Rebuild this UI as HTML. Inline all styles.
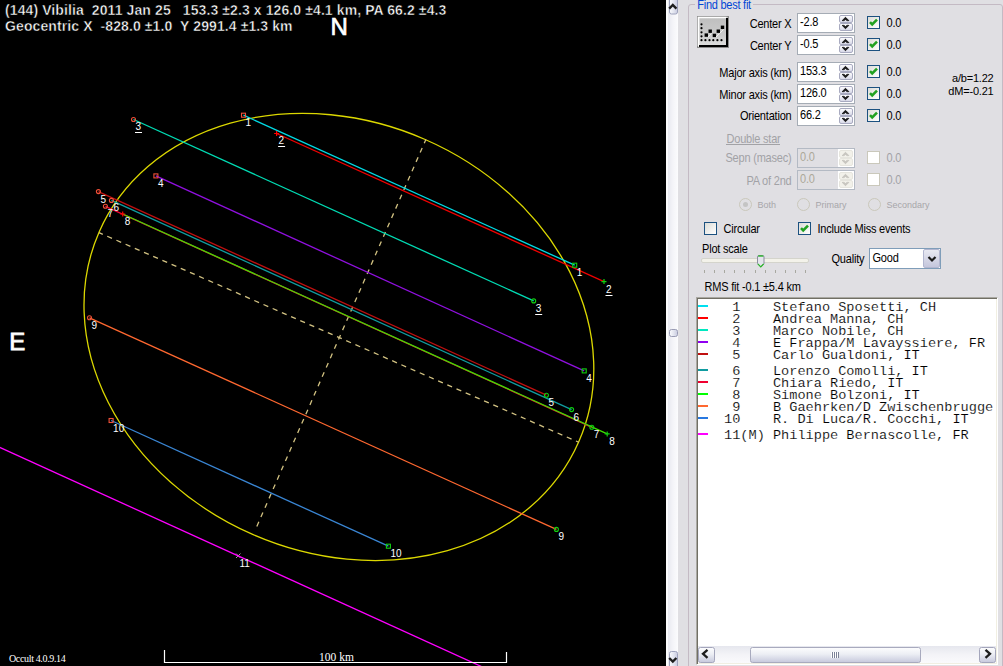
<!DOCTYPE html>
<html><head><meta charset="utf-8"><style>
*{margin:0;padding:0;box-sizing:border-box}
html,body{width:1003px;height:666px;overflow:hidden;background:#000;position:relative;font-family:"Liberation Sans",sans-serif}
#plot{position:absolute;left:0;top:0;width:666px;height:666px;background:#000;overflow:hidden}
#vs{position:absolute;left:666px;top:0;width:12px;height:666px;background:#fbfbfc}
.vtrack{position:absolute;left:2px;top:0;width:10px;height:666px;background:linear-gradient(90deg,#eeeef4,#f8f8fb 60%,#f4f4f8)}
.vbtn{position:absolute;left:3px;width:9px;border:1px solid #a3a3b8;border-radius:2px;background:linear-gradient(90deg,#f4f4f8,#d4d4e2)}
.vthumb{position:absolute;left:3px;top:329px;width:9px;height:8px;border:1px solid #9a9ab0;border-radius:2px;background:linear-gradient(90deg,#f4f4f8,#d0d0de)}
#panel{position:absolute;left:677px;top:0;width:326px;height:666px;background:#e0dfe3}
#ui{position:absolute;left:0;top:0;width:1003px;height:666px;overflow:hidden}
#ui>*{position:absolute}
.t{white-space:nowrap;font-family:"Liberation Sans",sans-serif}
.gbox{left:688px;top:4px;width:315px;height:700px;border:1px solid #c4bac4;border-radius:3px}
.gtitle{left:695px;top:0px;width:58px;height:8px;background:#e0dfe3}
.uline{height:1px;background:#a2a2a6}
.tb{left:797px;width:58px;height:20px;border:1px solid #a5acb5;background:#fff}
.tb.dis{background:#e0dfe3;border-color:#b4bac4}
.spin{width:14px;height:16px}
.spin i{position:absolute;left:0;width:14px;height:8px;border:1px solid #a8aac0;border-radius:2px;background:linear-gradient(180deg,#fcfcfe,#d8d9e8)}
.spin i.up{top:0}.spin i.dn{top:8px}
.spin.dis{background:#fff;outline:1px solid #fff}
.spin.dis i{border-color:#e6e5de;background:#f2f1ea}
.cb{width:13px;height:13px;border:1px solid #1c5180;background:linear-gradient(135deg,#dcdcd7,#fff)}
.cb.dis{border-color:#cac8bb;background:#fff}
.ck{position:absolute}
.rad{width:13px;height:13px;border:1px solid #cac8bb;border-radius:50%;background:transparent}
.rad.sel::after{content:"";position:absolute;left:3px;top:3px;width:5px;height:5px;border-radius:50%;background:#c4c4c4}
.track{left:701px;top:258px;width:108px;height:5px;border:1px solid #d4d4cc;border-radius:2px;background:#f3f2ea}
.tick{top:270px;width:1px;height:3px;background:#a8a8a0}
.combo{left:869px;top:248px;width:72px;height:21px;border:1px solid #7f9db9;background:#fff}
.cbtn{left:923px;top:249px;width:17px;height:19px;border:1px solid #b2b6d0;border-radius:2px;background:linear-gradient(180deg,#e8e9f2,#c4c6dc)}
.lbox{left:696px;top:297px;width:302px;height:368px;border:1px solid;border-color:#a9a8a2 #fff #fff #a9a8a2;background:#fff;box-shadow:inset 1px 1px 0 #716f64,inset -1px -1px 0 #f1efe2}
.bar{width:10px;height:2px}
.row{left:724px;font-family:"Liberation Mono",monospace;font-size:13.6px;line-height:14px;white-space:pre;color:#000;-webkit-text-stroke:0.15px #fff}
.hs{left:698px;top:646px;width:298px;height:17px;background:linear-gradient(180deg,#f0f0f4,#fafafc)}
.hs>div{position:absolute}
.hbtn{top:1px;width:17px;height:16px;border:1px solid #a3a3b8;border-radius:2px;background:linear-gradient(180deg,#fff,#cfd0de)}
.hthumb{left:52px;top:1px;width:171px;height:16px;border:1px solid #a8a8bc;border-radius:2px;background:linear-gradient(180deg,#fff,#d4d4e0)}

.hsb,#vsb{position:absolute}

</style></head><body>
<div id="plot">
<svg width="666" height="666" viewBox="0 0 666 666" style="position:absolute;left:0;top:0">
<ellipse cx="338.9" cy="336.95" rx="261.75" ry="215.5" transform="rotate(23.6 338.9 336.95)" fill="none" stroke="#dcd800" stroke-width="1.3"/>
<line x1="99.04" y1="232.66" x2="578.76" y2="442.24" stroke="#d2c282" stroke-width="1.3" stroke-dasharray="5.2 4.83" stroke-dashoffset="1.09"/>
<line x1="425.88" y1="139.47" x2="255.33" y2="529.84" stroke="#d2c282" stroke-width="1.3" stroke-dasharray="5 5.2" stroke-dashoffset="0.94"/>
<line x1="243.5" y1="115.2" x2="574.7" y2="265.2" stroke="#00dce6" stroke-width="1.3"/>
<line x1="276.6" y1="133.5" x2="604.0" y2="281.6" stroke="#f00000" stroke-width="1.3"/>
<line x1="133.5" y1="119.5" x2="533.7" y2="300.9" stroke="#00dcb4" stroke-width="1.3"/>
<line x1="155.9" y1="175.9" x2="584.2" y2="370.9" stroke="#9010e0" stroke-width="1.3"/>
<line x1="98.4" y1="191.6" x2="546.4" y2="395.2" stroke="#c01010" stroke-width="1.3"/>
<line x1="111.4" y1="200.4" x2="571.6" y2="409.6" stroke="#109ca0" stroke-width="1.3"/>
<line x1="105.4" y1="206.3" x2="591.8" y2="427.3" stroke="#f00030" stroke-width="1.3"/>
<line x1="122.7" y1="214.0" x2="607.2" y2="433.9" stroke="#40e000" stroke-width="1.3"/>
<line x1="89.5" y1="317.8" x2="556.4" y2="529.4" stroke="#ff6830" stroke-width="1.3"/>
<line x1="111.1" y1="420.5" x2="388.4" y2="546.2" stroke="#3a86d4" stroke-width="1.3"/>
<path d="M236 553.5l4.5 4.5M240.5 553.5l-4.5 4.5" stroke="#a0a0a0" stroke-width="1"/>
<line x1="-2" y1="446.6" x2="482" y2="666.8" stroke="#ff00ff" stroke-width="1.3"/>
<rect x="241.5" y="113.2" width="4" height="4" fill="none" stroke="#f05038" stroke-width="1.1"/>
<rect x="572.7" y="263.2" width="4" height="4" fill="none" stroke="#10d010" stroke-width="1.1"/>
<path d="M274.1 133.5H279.1M276.6 131.0V136.0" stroke="#ff0000" stroke-width="1.2"/>
<path d="M601.5 281.6H606.5M604.0 279.1V284.1" stroke="#10d010" stroke-width="1.2"/>
<circle cx="133.5" cy="119.5" r="2" fill="none" stroke="#f05038" stroke-width="1.1"/>
<circle cx="533.7" cy="300.9" r="2" fill="none" stroke="#10d010" stroke-width="1.1"/>
<rect x="153.9" y="173.9" width="4" height="4" fill="none" stroke="#f05038" stroke-width="1.1"/>
<rect x="582.2" y="368.9" width="4" height="4" fill="none" stroke="#10d010" stroke-width="1.1"/>
<circle cx="98.4" cy="191.6" r="2" fill="none" stroke="#f05038" stroke-width="1.1"/>
<circle cx="546.4" cy="395.2" r="2" fill="none" stroke="#10d010" stroke-width="1.1"/>
<circle cx="111.4" cy="200.4" r="2" fill="none" stroke="#f05038" stroke-width="1.1"/>
<circle cx="571.6" cy="409.6" r="2" fill="none" stroke="#10d010" stroke-width="1.1"/>
<circle cx="105.4" cy="206.3" r="2" fill="none" stroke="#f05038" stroke-width="1.1"/>
<circle cx="591.8" cy="427.3" r="2" fill="none" stroke="#10d010" stroke-width="1.1"/>
<path d="M120.2 214.0H125.2M122.7 211.5V216.5" stroke="#ff0000" stroke-width="1.2"/>
<path d="M604.7 433.9H609.7M607.2 431.4V436.4" stroke="#10d010" stroke-width="1.2"/>
<circle cx="89.5" cy="317.8" r="2" fill="none" stroke="#f05038" stroke-width="1.1"/>
<circle cx="556.4" cy="529.4" r="2" fill="none" stroke="#10d010" stroke-width="1.1"/>
<rect x="109.1" y="418.5" width="4" height="4" fill="none" stroke="#f05038" stroke-width="1.1"/>
<rect x="386.4" y="544.2" width="4" height="4" fill="none" stroke="#10d010" stroke-width="1.1"/>
<text x="245.5" y="126" fill="#fff" font-family="Liberation Sans" font-size="10">1</text>
<text x="576.7" y="276" fill="#fff" font-family="Liberation Sans" font-size="10">1</text>
<text x="278.6" y="144" fill="#fff" font-family="Liberation Sans" font-size="10">2</text>
<line x1="278.1" y1="146.5" x2="285.1" y2="146.5" stroke="#fff" stroke-width="1"/>
<text x="606.0" y="293" fill="#fff" font-family="Liberation Sans" font-size="10">2</text>
<line x1="605.5" y1="295.5" x2="612.5" y2="295.5" stroke="#fff" stroke-width="1"/>
<text x="135.5" y="130" fill="#fff" font-family="Liberation Sans" font-size="10">3</text>
<line x1="135.0" y1="132.5" x2="142.0" y2="132.5" stroke="#fff" stroke-width="1"/>
<text x="535.7" y="312" fill="#fff" font-family="Liberation Sans" font-size="10">3</text>
<line x1="535.2" y1="314.5" x2="542.2" y2="314.5" stroke="#fff" stroke-width="1"/>
<text x="157.9" y="187" fill="#fff" font-family="Liberation Sans" font-size="10">4</text>
<text x="586.2" y="382" fill="#fff" font-family="Liberation Sans" font-size="10">4</text>
<text x="100.4" y="203" fill="#fff" font-family="Liberation Sans" font-size="10">5</text>
<text x="548.4" y="406" fill="#fff" font-family="Liberation Sans" font-size="10">5</text>
<text x="113.4" y="211" fill="#fff" font-family="Liberation Sans" font-size="10">6</text>
<text x="573.6" y="421" fill="#fff" font-family="Liberation Sans" font-size="10">6</text>
<text x="107.4" y="217" fill="#fff" font-family="Liberation Sans" font-size="10">7</text>
<text x="593.8" y="438" fill="#fff" font-family="Liberation Sans" font-size="10">7</text>
<text x="124.7" y="225" fill="#fff" font-family="Liberation Sans" font-size="10">8</text>
<text x="609.2" y="445" fill="#fff" font-family="Liberation Sans" font-size="10">8</text>
<text x="91.5" y="329" fill="#fff" font-family="Liberation Sans" font-size="10">9</text>
<text x="558.4" y="540" fill="#fff" font-family="Liberation Sans" font-size="10">9</text>
<text x="113.1" y="432" fill="#fff" font-family="Liberation Sans" font-size="10">10</text>
<text x="390.4" y="557" fill="#fff" font-family="Liberation Sans" font-size="10">10</text>
<text x="239.5" y="567" fill="#fff" font-family="Liberation Sans" font-size="10">11</text>
<path d="M164.5 650V662.5H506.5V652" fill="none" stroke="#fff" stroke-width="1.2"/>
<text x="319" y="661" fill="#fff" font-family="Liberation Serif" font-size="11.5">100 km</text>
<text x="9" y="662" fill="#fff" font-family="Liberation Serif" font-size="10" letter-spacing="-0.35">Occult 4.0.9.14</text>
<text x="5" y="15" fill="#fff" font-family="Liberation Sans" font-weight="bold" font-size="14" letter-spacing="0.1" stroke="#000" stroke-width="0.45" xml:space="preserve">(144) Vibilia  2011 Jan 25   153.3 ±2.3 x 126.0 ±4.1 km, PA 66.2 ±4.3</text>
<text x="5" y="31" fill="#fff" font-family="Liberation Sans" font-weight="bold" font-size="14" letter-spacing="0.1" stroke="#000" stroke-width="0.45" xml:space="preserve">Geocentric X  -828.0 ±1.0  Y 2991.4 ±1.3 km</text>
<text x="330.5" y="35" fill="#fff" font-family="Liberation Sans" font-size="24" stroke="#fff" stroke-width="0.7">N</text>
<text x="9.3" y="349.5" fill="#fff" font-family="Liberation Sans" font-size="24" stroke="#fff" stroke-width="0.8">E</text>
</svg>
</div>
<div id="panel"></div>
<svg id="vsb" width="11.6" height="666" style="position:absolute;left:666px;top:0">
<defs>
<linearGradient id="vtr" x1="0" y1="0" x2="1" y2="0"><stop offset="0" stop-color="#e8e9f0"/><stop offset="0.5" stop-color="#f4f4f8"/><stop offset="1" stop-color="#fbfbfd"/></linearGradient>
<linearGradient id="vbt" x1="0" y1="0" x2="1" y2="0"><stop offset="0" stop-color="#fafbfe"/><stop offset="0.5" stop-color="#e4e6f0"/><stop offset="1" stop-color="#c8cbe0"/></linearGradient>
</defs>
<rect x="0" y="0" width="12" height="666" fill="#fcfcfd"/>
<rect x="2" y="0" width="9.6" height="666" fill="url(#vtr)"/>
<rect x="3.5" y="-3.5" width="8" height="17.5" rx="2" fill="url(#vbt)" stroke="#9ea2bc"/>
<path d="M3.2 8.6L6.8 5L10.4 8.6" fill="none" stroke="#1e1e1e" stroke-width="2.4"/>
<rect x="3.5" y="329.5" width="8" height="7" rx="2" fill="url(#vbt)" stroke="#9a9cb4"/>
<rect x="3.5" y="651.5" width="8" height="18" rx="2" fill="url(#vbt)" stroke="#9ea2bc"/>
<path d="M3.2 658L6.8 661.6L10.4 658" fill="none" stroke="#1e1e1e" stroke-width="2.4"/>
</svg>
<div id="ui">
<div class="gbox"></div>
<div class="gtitle"></div>
<div class="t" style="top:-1px;left:697.3px;font-size:11px;line-height:13px;color:#0046d5;letter-spacing:-0.25px;transform:scaleY(1.1);transform-origin:0 10px;">Find best fit</div>
<svg class="fitbtn" width="32" height="32" style="left:697px;top:16px">
<defs><linearGradient id="bg" x1="0" y1="0" x2="0" y2="1"><stop offset="0" stop-color="#bebebe"/><stop offset="0.6" stop-color="#cacaca"/><stop offset="1" stop-color="#e2e2e2"/></linearGradient></defs>
<rect x="0.5" y="0.5" width="31" height="31" fill="url(#bg)" stroke="#8c8c8c"/>
<path d="M1.5 30V1.5H29.5" fill="none" stroke="#fff" stroke-width="1.6"/>
<path d="M2 30H30V2" fill="none" stroke="#000" stroke-width="2"/>
<g fill="#000">
<circle cx="4.5" cy="8.3" r="1.1"/><circle cx="4.5" cy="12.2" r="1.1"/><circle cx="4.5" cy="16.3" r="1.1"/><circle cx="4.5" cy="20.3" r="1.1"/><circle cx="4.5" cy="24.2" r="1.1"/>
<circle cx="8.4" cy="24.2" r="1.1"/><circle cx="12.5" cy="24.2" r="1.1"/><circle cx="16.3" cy="24.2" r="1.1"/><circle cx="20.4" cy="24.2" r="1.1"/><circle cx="24.5" cy="24.2" r="1.1"/>
<rect x="7.6" y="17.4" width="3.4" height="3.4"/><rect x="11.5" y="13.5" width="3.4" height="3.4"/><rect x="15.7" y="17.7" width="3.4" height="3.4"/><rect x="19.6" y="13.5" width="3.4" height="3.4"/><rect x="23.8" y="9.6" width="3.4" height="3.4"/>
</g>
<path d="M11 21L14.5 17.5M19 21L22.5 17.5M23 17L26.5 13.5" stroke="#f0f0f0" stroke-width="1"/>
</svg>
<div class="t" style="top:18px;right:211.5px;font-size:11px;line-height:13px;color:#000;letter-spacing:-0.2px;transform:scaleY(1.1);transform-origin:0 10px;">Center X</div>
<div class="tb" style="top:13px"></div>
<div class="t" style="top:16px;left:800px;font-size:11px;line-height:13px;color:#000;letter-spacing:-0.2px;transform:scaleY(1.1);transform-origin:0 10px;">-2.8</div>
<div class="spin" style="left:839px;top:15px"><i class="up"></i><i class="dn"></i><svg width="14" height="16" style="position:absolute;left:0;top:0"><path d="M3.2 5.6L6.5 2.3L9.8 5.6H8.2L6.5 4.5L4.8 5.6ZM3.2 10.4H4.8L6.5 11.5L8.2 10.4H9.8L6.5 13.7Z" fill="#1a1a1a" stroke="#1a1a1a" stroke-width="1" stroke-linejoin="round"/></svg></div>
<div class="cb chk" style="left:867px;top:16px"></div>
<svg class="ck" width="13" height="13" style="left:867px;top:16px"><path d="M3 6.2L5.2 8.4L10 3.6" fill="none" stroke="#21a121" stroke-width="2.6"/></svg>
<div class="t" style="top:17px;left:886.5px;font-size:11px;line-height:13px;color:#000;letter-spacing:-0.2px;transform:scaleY(1.1);transform-origin:0 10px;">0.0</div>
<div class="t" style="top:40px;right:211.5px;font-size:11px;line-height:13px;color:#000;letter-spacing:-0.2px;transform:scaleY(1.1);transform-origin:0 10px;">Center Y</div>
<div class="tb" style="top:35px"></div>
<div class="t" style="top:38px;left:800px;font-size:11px;line-height:13px;color:#000;letter-spacing:-0.2px;transform:scaleY(1.1);transform-origin:0 10px;">-0.5</div>
<div class="spin" style="left:839px;top:37px"><i class="up"></i><i class="dn"></i><svg width="14" height="16" style="position:absolute;left:0;top:0"><path d="M3.2 5.6L6.5 2.3L9.8 5.6H8.2L6.5 4.5L4.8 5.6ZM3.2 10.4H4.8L6.5 11.5L8.2 10.4H9.8L6.5 13.7Z" fill="#1a1a1a" stroke="#1a1a1a" stroke-width="1" stroke-linejoin="round"/></svg></div>
<div class="cb chk" style="left:867px;top:38px"></div>
<svg class="ck" width="13" height="13" style="left:867px;top:38px"><path d="M3 6.2L5.2 8.4L10 3.6" fill="none" stroke="#21a121" stroke-width="2.6"/></svg>
<div class="t" style="top:39px;left:886.5px;font-size:11px;line-height:13px;color:#000;letter-spacing:-0.2px;transform:scaleY(1.1);transform-origin:0 10px;">0.0</div>
<div class="t" style="top:67px;right:211.5px;font-size:11px;line-height:13px;color:#000;letter-spacing:-0.2px;transform:scaleY(1.1);transform-origin:0 10px;">Major axis (km)</div>
<div class="tb" style="top:62px"></div>
<div class="t" style="top:65px;left:800px;font-size:11px;line-height:13px;color:#000;letter-spacing:-0.2px;transform:scaleY(1.1);transform-origin:0 10px;">153.3</div>
<div class="spin" style="left:839px;top:64px"><i class="up"></i><i class="dn"></i><svg width="14" height="16" style="position:absolute;left:0;top:0"><path d="M3.2 5.6L6.5 2.3L9.8 5.6H8.2L6.5 4.5L4.8 5.6ZM3.2 10.4H4.8L6.5 11.5L8.2 10.4H9.8L6.5 13.7Z" fill="#1a1a1a" stroke="#1a1a1a" stroke-width="1" stroke-linejoin="round"/></svg></div>
<div class="cb chk" style="left:867px;top:65px"></div>
<svg class="ck" width="13" height="13" style="left:867px;top:65px"><path d="M3 6.2L5.2 8.4L10 3.6" fill="none" stroke="#21a121" stroke-width="2.6"/></svg>
<div class="t" style="top:66px;left:886.5px;font-size:11px;line-height:13px;color:#000;letter-spacing:-0.2px;transform:scaleY(1.1);transform-origin:0 10px;">0.0</div>
<div class="t" style="top:89px;right:211.5px;font-size:11px;line-height:13px;color:#000;letter-spacing:-0.2px;transform:scaleY(1.1);transform-origin:0 10px;">Minor axis (km)</div>
<div class="tb" style="top:84px"></div>
<div class="t" style="top:87px;left:800px;font-size:11px;line-height:13px;color:#000;letter-spacing:-0.2px;transform:scaleY(1.1);transform-origin:0 10px;">126.0</div>
<div class="spin" style="left:839px;top:86px"><i class="up"></i><i class="dn"></i><svg width="14" height="16" style="position:absolute;left:0;top:0"><path d="M3.2 5.6L6.5 2.3L9.8 5.6H8.2L6.5 4.5L4.8 5.6ZM3.2 10.4H4.8L6.5 11.5L8.2 10.4H9.8L6.5 13.7Z" fill="#1a1a1a" stroke="#1a1a1a" stroke-width="1" stroke-linejoin="round"/></svg></div>
<div class="cb chk" style="left:867px;top:87px"></div>
<svg class="ck" width="13" height="13" style="left:867px;top:87px"><path d="M3 6.2L5.2 8.4L10 3.6" fill="none" stroke="#21a121" stroke-width="2.6"/></svg>
<div class="t" style="top:88px;left:886.5px;font-size:11px;line-height:13px;color:#000;letter-spacing:-0.2px;transform:scaleY(1.1);transform-origin:0 10px;">0.0</div>
<div class="t" style="top:110px;right:211.5px;font-size:11px;line-height:13px;color:#000;letter-spacing:-0.2px;transform:scaleY(1.1);transform-origin:0 10px;">Orientation</div>
<div class="tb" style="top:106px"></div>
<div class="t" style="top:109px;left:800px;font-size:11px;line-height:13px;color:#000;letter-spacing:-0.2px;transform:scaleY(1.1);transform-origin:0 10px;">66.2</div>
<div class="spin" style="left:839px;top:108px"><i class="up"></i><i class="dn"></i><svg width="14" height="16" style="position:absolute;left:0;top:0"><path d="M3.2 5.6L6.5 2.3L9.8 5.6H8.2L6.5 4.5L4.8 5.6ZM3.2 10.4H4.8L6.5 11.5L8.2 10.4H9.8L6.5 13.7Z" fill="#1a1a1a" stroke="#1a1a1a" stroke-width="1" stroke-linejoin="round"/></svg></div>
<div class="cb chk" style="left:867px;top:109px"></div>
<svg class="ck" width="13" height="13" style="left:867px;top:109px"><path d="M3 6.2L5.2 8.4L10 3.6" fill="none" stroke="#21a121" stroke-width="2.6"/></svg>
<div class="t" style="top:110px;left:886.5px;font-size:11px;line-height:13px;color:#000;letter-spacing:-0.2px;transform:scaleY(1.1);transform-origin:0 10px;">0.0</div>
<div class="t" style="top:72px;right:9.5px;font-size:11px;line-height:13px;color:#000;letter-spacing:-0.2px;">a/b=1.22</div>
<div class="t" style="top:85px;right:9.5px;font-size:11px;line-height:13px;color:#000;letter-spacing:-0.2px;">dM=-0.21</div>
<div class="t" style="top:133px;left:726.5px;font-size:11px;line-height:13px;color:#a2a2a6;letter-spacing:-0.2px;transform:scaleY(1.1);transform-origin:0 10px;">Double star</div>
<div class="uline" style="left:726px;top:144px;width:54px"></div>
<div class="t" style="top:152px;right:211.5px;font-size:11px;line-height:13px;color:#a2a2a6;letter-spacing:-0.2px;transform:scaleY(1.1);transform-origin:0 10px;">Sepn (masec)</div>
<div class="tb dis" style="top:148px"></div>
<div class="t" style="top:151px;left:800px;font-size:11px;line-height:13px;color:#aca899;letter-spacing:-0.2px;transform:scaleY(1.1);transform-origin:0 10px;">0.0</div>
<div class="spin dis" style="left:839px;top:150px"><i class="up"></i><i class="dn"></i><svg width="14" height="16" style="position:absolute;left:0;top:0"><path d="M3.2 5.6L6.5 2.3L9.8 5.6H8.2L6.5 4.5L4.8 5.6ZM3.2 10.4H4.8L6.5 11.5L8.2 10.4H9.8L6.5 13.7Z" fill="#c8c6c0" stroke="#c8c6c0" stroke-width="1" stroke-linejoin="round"/></svg></div>
<div class="cb dis" style="left:867px;top:151px"></div>
<div class="t" style="top:152px;left:886.5px;font-size:11px;line-height:13px;color:#a2a2a6;letter-spacing:-0.2px;transform:scaleY(1.1);transform-origin:0 10px;">0.0</div>
<div class="t" style="top:175px;right:211.5px;font-size:11px;line-height:13px;color:#a2a2a6;letter-spacing:-0.2px;transform:scaleY(1.1);transform-origin:0 10px;">PA of 2nd</div>
<div class="tb dis" style="top:170px"></div>
<div class="t" style="top:173px;left:800px;font-size:11px;line-height:13px;color:#aca899;letter-spacing:-0.2px;transform:scaleY(1.1);transform-origin:0 10px;">0.0</div>
<div class="spin dis" style="left:839px;top:172px"><i class="up"></i><i class="dn"></i><svg width="14" height="16" style="position:absolute;left:0;top:0"><path d="M3.2 5.6L6.5 2.3L9.8 5.6H8.2L6.5 4.5L4.8 5.6ZM3.2 10.4H4.8L6.5 11.5L8.2 10.4H9.8L6.5 13.7Z" fill="#c8c6c0" stroke="#c8c6c0" stroke-width="1" stroke-linejoin="round"/></svg></div>
<div class="cb dis" style="left:867px;top:173px"></div>
<div class="t" style="top:174px;left:886.5px;font-size:11px;line-height:13px;color:#a2a2a6;letter-spacing:-0.2px;transform:scaleY(1.1);transform-origin:0 10px;">0.0</div>
<div class="rad sel" style="left:739px;top:198px"></div>
<div class="t" style="top:200px;left:757.5px;font-size:9px;line-height:11px;color:#a7a6aa;letter-spacing:0px;">Both</div>
<div class="rad" style="left:797px;top:198px"></div>
<div class="t" style="top:200px;left:815.5px;font-size:9px;line-height:11px;color:#a7a6aa;letter-spacing:0px;">Primary</div>
<div class="rad" style="left:868px;top:198px"></div>
<div class="t" style="top:200px;left:886.5px;font-size:9px;line-height:11px;color:#a7a6aa;letter-spacing:0px;">Secondary</div>
<div class="cb en" style="left:704px;top:222px"></div>
<div class="t" style="top:223px;left:723.5px;font-size:11px;line-height:13px;color:#000;letter-spacing:-0.2px;transform:scaleY(1.1);transform-origin:0 10px;">Circular</div>
<div class="cb chk" style="left:798px;top:222px"></div>
<svg class="ck" width="13" height="13" style="left:798px;top:222px"><path d="M3 6.2L5.2 8.4L10 3.6" fill="none" stroke="#21a121" stroke-width="2.6"/></svg>
<div class="t" style="top:223px;left:817.5px;font-size:11px;line-height:13px;color:#000;letter-spacing:-0.2px;transform:scaleY(1.1);transform-origin:0 10px;">Include Miss events</div>
<div class="t" style="top:243px;left:702px;font-size:11px;line-height:13px;color:#000;letter-spacing:-0.2px;transform:scaleY(1.1);transform-origin:0 10px;">Plot scale</div>
<div class="track"></div>
<svg class="thumb" width="9" height="13" style="left:757px;top:255px"><path d="M0.5 2Q0.5 0.5 2 0.5H5.5Q7 0.5 7 2V8.5L3.75 11.8L0.5 8.5Z" fill="#e4e4ec" stroke="#8c8ca0" stroke-width="1"/><path d="M1.2 1H6.3" stroke="#2ab52a" stroke-width="1.4"/><path d="M0.8 8.9L3.75 11.9L6.7 8.9" fill="none" stroke="#2ab52a" stroke-width="1.3"/></svg>
<i class="tick" style="left:704px"></i>
<i class="tick" style="left:714px"></i>
<i class="tick" style="left:724px"></i>
<i class="tick" style="left:734px"></i>
<i class="tick" style="left:744px"></i>
<i class="tick" style="left:755px"></i>
<i class="tick" style="left:765px"></i>
<i class="tick" style="left:775px"></i>
<i class="tick" style="left:785px"></i>
<i class="tick" style="left:795px"></i>
<i class="tick" style="left:805px"></i>
<div class="t" style="top:253px;left:831.5px;font-size:11px;line-height:13px;color:#000;letter-spacing:-0.2px;transform:scaleY(1.1);transform-origin:0 10px;">Quality</div>
<div class="combo"></div>
<div class="t" style="top:252px;left:872.5px;font-size:11px;line-height:13px;color:#000;letter-spacing:-0.2px;transform:scaleY(1.1);transform-origin:0 10px;">Good</div>
<div class="cbtn"><svg width="17" height="18" style="position:absolute;left:0;top:0"><path d="M4.5 7L8 10.5L11.5 7" fill="none" stroke="#1a1a1a" stroke-width="2.2"/></svg></div>
<div class="t" style="top:281px;left:704.5px;font-size:11px;line-height:13px;color:#000;letter-spacing:-0.2px;transform:scaleY(1.1);transform-origin:0 10px;">RMS fit -0.1 ±5.4 km</div>
<div class="lbox"></div>
<div class="bar" style="left:698px;top:305px;background:#00e0f0"></div>
<div class="row" style="top:301px"> 1    Stefano Sposetti, CH</div>
<div class="bar" style="left:698px;top:317px;background:#ff0000"></div>
<div class="row" style="top:313px"> 2    Andrea Manna, CH</div>
<div class="bar" style="left:698px;top:329px;background:#00e8c0"></div>
<div class="row" style="top:325px"> 3    Marco Nobile, CH</div>
<div class="bar" style="left:698px;top:341px;background:#9000f0"></div>
<div class="row" style="top:337px"> 4    E Frappa/M Lavayssiere, FR</div>
<div class="bar" style="left:698px;top:353px;background:#c01010"></div>
<div class="row" style="top:349px"> 5    Carlo Gualdoni, IT</div>
<div class="bar" style="left:698px;top:369px;background:#109ca0"></div>
<div class="row" style="top:365px"> 6    Lorenzo Comolli, IT</div>
<div class="bar" style="left:698px;top:381px;background:#f00030"></div>
<div class="row" style="top:377px"> 7    Chiara Riedo, IT</div>
<div class="bar" style="left:698px;top:393px;background:#00ff00"></div>
<div class="row" style="top:389px"> 8    Simone Bolzoni, IT</div>
<div class="bar" style="left:698px;top:405px;background:#ff6830"></div>
<div class="row" style="top:401px"> 9    B Gaehrken/D Zwischenbrugge</div>
<div class="bar" style="left:698px;top:417px;background:#2878e0"></div>
<div class="row" style="top:413px">10    R. Di Luca/R. Cocchi, IT</div>
<div class="bar" style="left:698px;top:433px;background:#ff00ff"></div>
<div class="row" style="top:429px">11(M) Philippe Bernascolle, FR</div>
<svg class="hsb" width="298" height="17" style="left:698px;top:646px">
<defs>
<linearGradient id="htr" x1="0" y1="0" x2="0" y2="1"><stop offset="0" stop-color="#e6e7ee"/><stop offset="0.5" stop-color="#f3f3f7"/><stop offset="1" stop-color="#fafafc"/></linearGradient>
<linearGradient id="hbt" x1="0" y1="0" x2="0" y2="1"><stop offset="0" stop-color="#fdfdfe"/><stop offset="0.45" stop-color="#eceef4"/><stop offset="1" stop-color="#c6c8dc"/></linearGradient>
</defs>
<rect x="0" y="0" width="298" height="17" fill="url(#htr)"/>
<rect x="0.5" y="1.5" width="16" height="15" rx="2" fill="url(#hbt)" stroke="#a4a6bc"/>
<path d="M9.5 3.8L5 7.8L9.5 11.8" fill="none" stroke="#1e1e1e" stroke-width="2.3"/>
<rect x="52.5" y="1.5" width="170" height="15" rx="2" fill="url(#hbt)" stroke="#a8aabe"/>
<path d="M134.5 6V12M136.5 6V12M138.5 6V12M140.5 6V12" stroke="#7c8298" stroke-width="1"/>
<path d="M133.5 6V12M135.5 6V12M137.5 6V12M139.5 6V12" stroke="#fff" stroke-width="1"/>
<rect x="281.5" y="1.5" width="16" height="15" rx="2" fill="url(#hbt)" stroke="#a4a6bc"/>
<path d="M287.5 3.8L292 7.8L287.5 11.8" fill="none" stroke="#1e1e1e" stroke-width="2.3"/>
</svg>
</div>

</body></html>
